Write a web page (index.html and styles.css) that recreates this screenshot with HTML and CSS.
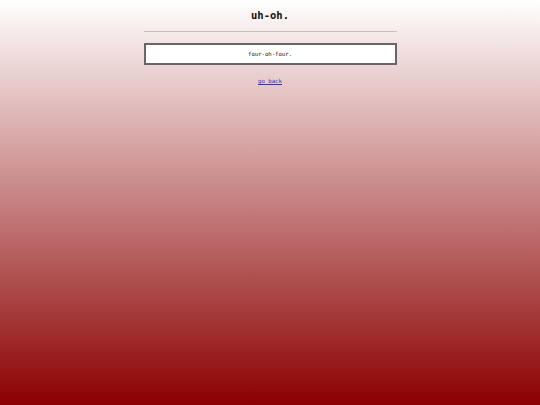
FILE: index.html
```html
<!DOCTYPE html>
<html lang="en">
<head>
    <meta charset="UTF-8">
    <meta name="viewport" content="width=device-width, initial-scale=1.0">
    <title>404</title>
    <link rel="stylesheet" href="styles.css">
</head>
<body>

<div class="page">
    <h1 class="title">uh-oh.</h1>
    <hr class="rule">
    <div class="message">four-oh-four.</div>
    <p class="back"><a href="/">go back</a></p>
</div>

</body>
</html>
```

FILE: styles.css
```css
html {
    min-height: 100%;
    background: linear-gradient(to bottom, #ffffff 0%, #8b0000 100%);
}
body {
    margin: 0;
    font-family: "DejaVu Sans Mono", "Liberation Mono", monospace;
    color: #111;
}
.page {
    width: 253px;
    margin: 0 auto;
    padding-top: 8px;
    text-align: center;
}
.title {
    margin: 0;
    font-size: 10.5px;
    line-height: 15px;
    font-weight: bold;
}
.rule {
    border: none;
    border-top: 1px solid #c8c0c0;
    margin: 8px 0 11px;
}
.message {
    background-color: #fff;
    border: 2px solid #6b6466;
    height: 18px;
    line-height: 18px;
    font-size: 5.6px;
}
.back {
    margin: 12px 0 0;
    font-size: 5.7px;
    line-height: 8px;
}
.back a {
    color: #3333cc;
}
```
